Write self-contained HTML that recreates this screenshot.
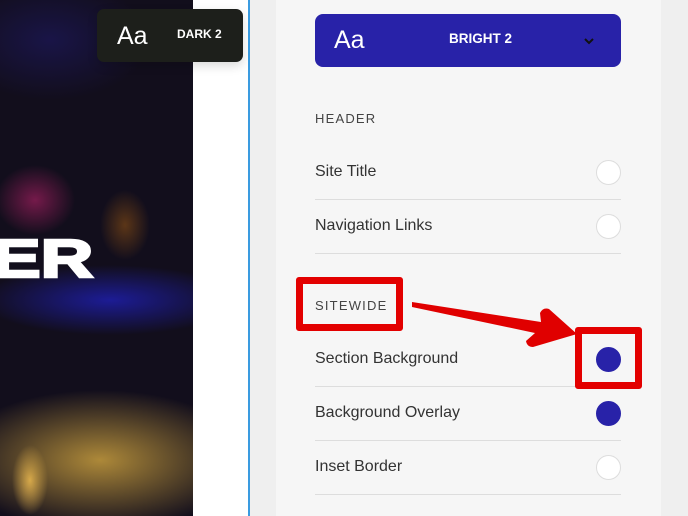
<!DOCTYPE html>
<html><head><style>
*{margin:0;padding:0;box-sizing:border-box}
body{width:688px;height:516px;overflow:hidden;position:relative;background:#fff;font-family:"Liberation Sans",sans-serif}
.img{position:absolute;left:0;top:0;width:193px;height:516px;background:
radial-gradient(ellipse 40px 35px at 35px 200px,rgba(150,30,90,.75),transparent),
radial-gradient(ellipse 25px 35px at 125px 225px,rgba(140,80,20,.6),transparent),
radial-gradient(ellipse 150px 70px at 100px 460px,rgba(190,150,60,.9),transparent),
radial-gradient(ellipse 18px 35px at 30px 480px,rgba(255,200,90,.9),transparent),
radial-gradient(ellipse 130px 35px at 110px 300px,rgba(30,30,170,.85),transparent),
radial-gradient(ellipse 100px 60px at 50px 40px,rgba(30,25,100,.6),transparent),
#120e1c}
.er{position:absolute;left:-8px;top:232px;color:#fff;font:900 54px/1 "Liberation Sans",sans-serif;-webkit-text-stroke:2.5px #fff;transform:scaleX(1.35);transform-origin:left}
.dark{position:absolute;left:97px;top:9px;width:146px;height:53px;background:#1d1f1b;border-radius:7px;box-shadow:0 4px 10px rgba(0,0,0,.15)}
.dark .aa{position:absolute;left:20px;top:13px;color:#fff;font-size:25px}
.dark .t{position:absolute;left:80px;top:18px;color:#fff;font-size:12px;font-weight:bold}
.line{position:absolute;left:248px;top:0;width:2px;height:516px;background:#3a9be0}
.gut{position:absolute;left:250px;top:0;width:26px;height:516px;background:#efefef}
.panel{position:absolute;left:276px;top:0;width:385px;height:516px;background:#f6f6f6}
.rs{position:absolute;left:661px;top:0;width:27px;height:516px;background:#efefef}
.btn{position:absolute;left:315px;top:14px;width:306px;height:53px;background:#2822a8;border-radius:8px;color:#fff}
.btn .aa{position:absolute;left:19px;top:12px;font-size:25px}
.btn .t{position:absolute;left:134px;top:17px;font-size:13.5px;font-weight:bold}
.lab{position:absolute;left:315px;font-size:13px;color:#444;letter-spacing:1.2px}
.row{position:absolute;left:315px;width:306px;height:54px;border-bottom:1px solid #ddd;font-size:16px;color:#333}
.row span{position:absolute;left:0;top:17px}
.row i{position:absolute;right:0;top:14px;width:25px;height:25px;border-radius:50%;background:#fff;border:1px solid #ddd}
.row i.b{background:#2822a8;border-color:#2822a8}
.red{position:absolute;border:7px solid #e30000;border-radius:3px}
</style></head><body>
<div class="img"></div><div class="er">ER</div>
<div class="dark"><span class="aa">Aa</span><span class="t">DARK 2</span></div>
<div class="line"></div><div class="gut"></div><div class="panel"></div><div class="rs"></div>
<div class="btn"><span class="aa">Aa</span><span class="t">BRIGHT 2</span>
<svg style="position:absolute;left:268px;top:23px" width="12" height="8"><path d="M2 2l4 4 4-4" stroke="#111" stroke-width="2" fill="none"/></svg></div>
<div class="lab" style="top:111px">HEADER</div>
<div class="row" style="top:146px"><span>Site Title</span><i></i></div>
<div class="row" style="top:200px"><span>Navigation Links</span><i></i></div>
<div class="lab" style="top:298px">SITEWIDE</div>
<div class="row" style="top:333px"><span>Section Background</span><i class="b"></i></div>
<div class="row" style="top:387px"><span>Background Overlay</span><i class="b"></i></div>
<div class="row" style="top:441px"><span>Inset Border</span><i></i></div>
<div class="red" style="left:296px;top:277px;width:107px;height:54px"></div>
<div class="red" style="left:575px;top:327px;width:67px;height:62px"></div>
<svg style="position:absolute;left:0;top:0" width="688" height="516"><path d="M412 302 L412 307 L535 333 L526 341 Q527 347 533 347 L577 334 L549 309 Q543 307 540 313 L541 322 Z" fill="#e00000"/></svg>
</body></html>
